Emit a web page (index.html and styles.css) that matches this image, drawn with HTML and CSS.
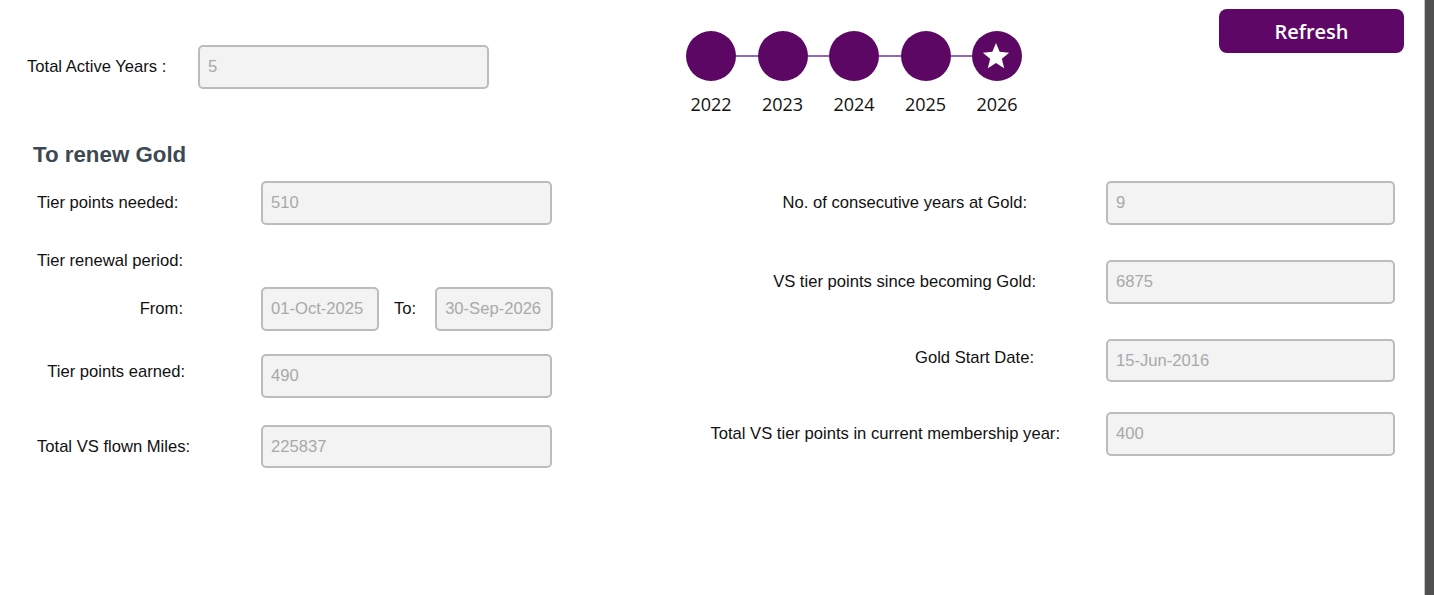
FILE: index.html
```html
<html>

  <head>

    <title>
      Tier status
    </title>

    <link rel="stylesheet" href="styles.css">

  </head>

  <body>

  <div class = "window">

    <div class = "page">

      <div class = "top">

        <div class = "activeYears">
          <span class = "label activeLabel">Total Active Years :</span>
          <div class = "field wide">5</div>
        </div>

        <div class = "timeline">
          <div class = "track">
            <div class = "dot"></div>
            <div class = "link"></div>
            <div class = "dot"></div>
            <div class = "link"></div>
            <div class = "dot"></div>
            <div class = "link"></div>
            <div class = "dot"></div>
            <div class = "link"></div>
            <div class = "dot">
              <svg class = "star" viewBox = "0 0 24 24">
                <polygon points = "12,1.5 14.9,8.6 22.5,9.3 16.7,14.2 18.5,21.7 12,17.6 5.5,21.7 7.3,14.2 1.5,9.3 9.1,8.6" fill = "#ffffff"/>
              </svg>
            </div>
          </div>
          <div class = "years">
            <span>2022</span>
            <span>2023</span>
            <span>2024</span>
            <span>2025</span>
            <span>2026</span>
          </div>
        </div>

        <button class = "refresh">Refresh</button>

      </div>

      <div class = "form">

        <div class = "leftColumn">

          <h2 class = "heading">To renew Gold</h2>

          <div class = "row firstRow">
            <span class = "label cell">Tier points needed:</span>
            <div class = "field wide">510</div>
          </div>

          <div class = "periodLabel label">Tier renewal period:</div>

          <div class = "row periodRow">
            <span class = "label cell fromLabel">From:</span>
            <div class = "field narrow">01-Oct-2025</div>
            <span class = "label toLabel">To:</span>
            <div class = "field narrow">30-Sep-2026</div>
          </div>

          <div class = "row earnedRow">
            <span class = "label cell earnedLabel">Tier points earned:</span>
            <div class = "field wide">490</div>
          </div>

          <div class = "row milesRow">
            <span class = "label cell">Total VS flown Miles:</span>
            <div class = "field wide thin">225837</div>
          </div>

        </div>

        <div class = "rightColumn">

          <div class = "rightRow">
            <span class = "label rightLabel consecutive">No. of consecutive years at Gold:</span>
            <div class = "field">9</div>
          </div>

          <div class = "rightRow">
            <span class = "label rightLabel since">VS tier points since becoming Gold:</span>
            <div class = "field">6875</div>
          </div>

          <div class = "rightRow">
            <span class = "label rightLabel startDate">Gold Start Date:</span>
            <div class = "field thin">15-Jun-2016</div>
          </div>

          <div class = "rightRow lastRow">
            <span class = "label rightLabel membership">Total VS tier points in current membership year:</span>
            <div class = "field">400</div>
          </div>

        </div>

      </div>

    </div>

    <div class = "scrollbar"></div>

  </div>

  </body>

</html>
```

FILE: styles.css
```css
body
{
  margin: 0;
  font-family: "Liberation Sans", Arial, sans-serif;
  background: #ffffff;
}

.window
{
  display: flex;
  height: 595px;
  overflow: hidden;
}

.page
{
  flex: 1;
}

.scrollbar
{
  width: 9px;
  background: #505050;
  border-left: 1px solid #c4c4c4;
}

/* top strip: active years, year timeline, refresh button */

.top
{
  display: flex;
  align-items: flex-start;
  padding-left: 27px;
}

.activeYears
{
  display: flex;
  align-items: center;
  margin-top: 45px;
}

.activeLabel
{
  width: 171px;
}

.label
{
  flex-shrink: 0;
  font-size: 16.6px;
  line-height: 20px;
  color: #111111;
  white-space: nowrap;
}

.field
{
  flex-shrink: 0;
  box-sizing: border-box;
  height: 44px;
  padding-left: 8px;
  display: flex;
  align-items: center;
  background: #f3f3f3;
  border: 2px solid #bcbcbc;
  border-radius: 5px;
  color: #a9a9a9;
  font-size: 16.6px;
  white-space: nowrap;
  overflow: hidden;
}

.wide
{
  width: 291px;
}

.thin
{
  height: 43px;
}

.narrow
{
  width: 118px;
}

.timeline
{
  margin-left: 197px;
  margin-top: 31px;
}

.track
{
  display: flex;
  align-items: center;
}

.dot
{
  width: 50px;
  height: 50px;
  border-radius: 50%;
  background: #5c0764;
  display: flex;
  align-items: center;
  justify-content: center;
}

.star
{
  width: 30px;
  height: 30px;
  margin-left: -3px;
}

.link
{
  width: 21.5px;
  height: 2px;
  background: #9466b8;
}

.years
{
  display: flex;
  gap: 21.5px;
  margin-top: 11px;
}

.years span
{
  width: 50px;
  text-align: center;
  font-family: "Open Sans", sans-serif;
  font-size: 18px;
  line-height: 24px;
  color: #111111;
}

.refresh
{
  margin-left: auto;
  margin-top: 9px;
  margin-right: 20px;
  width: 185px;
  height: 44px;
  border: none;
  border-radius: 8px;
  background: #5e0766;
  color: #ffffff;
  font-family: "Open Sans", sans-serif;
  font-weight: 600;
  font-size: 20px;
}

/* lower form, two columns */

.form
{
  display: flex;
  margin-top: 27px;
}

.leftColumn
{
  box-sizing: border-box;
  width: 560px;
  padding-left: 37px;
}

.heading
{
  margin: 0 0 0 -4px;
  font-size: 22.3px;
  line-height: 24px;
  font-weight: bold;
  color: #3d4852;
}

.row
{
  display: flex;
  align-items: center;
}

.cell
{
  box-sizing: border-box;
  width: 224px;
}

.firstRow
{
  margin-top: 14px;
}

.periodLabel
{
  margin-top: 26px;
}

.periodRow
{
  margin-top: 16px;
}

.fromLabel
{
  text-align: right;
  padding-right: 78px;
}

.toLabel
{
  margin: 0 19px 0 15px;
}

.earnedRow
{
  margin-top: 23px;
}

.earnedLabel
{
  text-align: right;
  padding-right: 76px;
  margin-bottom: 8px;
}

.milesRow
{
  margin-top: 27px;
}

.rightColumn
{
  flex: 1;
  margin-right: 29px;
  padding-top: 38px;
  display: flex;
  flex-direction: column;
  gap: 35px;
}

.rightRow
{
  display: grid;
  grid-template-columns: 1fr 289px;
  align-items: center;
}

.rightRow .field
{
  width: 289px;
}

.lastRow
{
  margin-top: -5px;
}

.rightLabel
{
  text-align: right;
}

.consecutive
{
  padding-right: 79px;
}

.since
{
  padding-right: 70px;
}

.startDate
{
  padding-right: 72px;
  margin-bottom: 6px;
}

.membership
{
  padding-right: 46px;
}
```
